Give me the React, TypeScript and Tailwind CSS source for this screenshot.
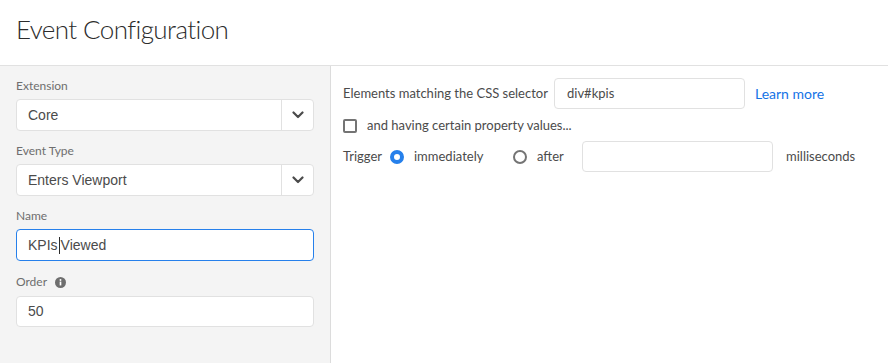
import React from 'react'

const labelCls = 'text-[12px] leading-[14px] text-[#6e6e6e] font-["Lato",sans-serif]'

function Chevron() {
  return (
    <svg width="12" height="8" viewBox="0 0 12 8" fill="none">
      <path d="M1.5 1.5L6 6l4.5-4.5" stroke="#4b4b4b" strokeWidth="2.2" strokeLinecap="round" strokeLinejoin="round" />
    </svg>
  )
}

function SelectBox({ value }: { value: string }) {
  return (
    <div className="flex h-[32px] w-[298px] rounded-[4px] border border-[#e1e1e1] bg-white">
      <div className='flex flex-1 items-center pl-[11px] text-[14px] text-[#4b4b4b] font-["Liberation_Sans",Arial,sans-serif]'>
        {value}
      </div>
      <div className="flex w-[32px] items-center justify-center border-l border-[#e1e1e1]">
        <Chevron />
      </div>
    </div>
  )
}

function Field({ label, children, icon }: { label: string; children: React.ReactNode; icon?: boolean }) {
  return (
    <div className="flex flex-col">
      <div className={`${labelCls} flex items-center gap-[8px] h-[14px] ${icon ? 'mb-[7px] mt-[1px]' : 'mb-[6px]'}`}>
        {label}
        {icon && (
          <svg width="11" height="11" viewBox="0 0 12 12">
            <circle cx="6" cy="6" r="6" fill="#6e6e6e" />
            <rect x="5.1" y="5" width="1.8" height="4.2" fill="white" />
            <circle cx="6" cy="3.2" r="1.05" fill="white" />
          </svg>
        )}
      </div>
      {children}
    </div>
  )
}

export default function App() {
  return (
    <div className='w-[888px] h-[363px] bg-white flex flex-col overflow-hidden font-["Lato",sans-serif]'>
      <div className="h-[66px] border-b border-[#e1e1e1] flex items-center pl-[16px] pb-[6px]">
        <h1 className="text-[26px] font-light text-[#2c2c2c] tracking-[-0.6px]">Event Configuration</h1>
      </div>
      <div className="flex flex-1">
        <div className="w-[331px] bg-[#f4f4f4] border-r border-[#dcdcdc] pl-[16px] pt-[13px] flex flex-col gap-[13px]">
          <Field label="Extension">
            <SelectBox value="Core" />
          </Field>
          <Field label="Event Type">
            <SelectBox value="Enters Viewport" />
          </Field>
          <Field label="Name">
            <div className='flex h-[32px] w-[298px] items-center rounded-[4px] border border-[#2680eb] bg-white pl-[11px] text-[14px] text-[#4b4b4b] font-["Liberation_Sans",Arial,sans-serif]'>
              KPIs<span className="mx-[1px] inline-block h-[17px] w-[1px] bg-[#2c2c2c]" />Viewed
            </div>
          </Field>
          <Field label="Order" icon>
            <div className='flex h-[31px] w-[298px] items-center rounded-[4px] border border-[#e1e1e1] bg-white pl-[11px] text-[14px] text-[#4b4b4b] font-["Liberation_Sans",Arial,sans-serif]'>
              50
            </div>
          </Field>
        </div>
        <div className="flex-1 pl-[12px] pt-[12px] flex flex-col text-[13px] text-[#4b4b4b] whitespace-nowrap">
          <div className="flex items-center h-[31px]">
            <span className="w-[211px]">Elements matching the CSS selector</span>
            <div className="flex h-[31px] w-[191px] items-center rounded-[4px] border border-[#e1e1e1] bg-white pl-[12px] text-[#4b4b4b]">
              div#kpis
            </div>
            <span className="ml-[10px] text-[14px] text-[#1473e6]">Learn more</span>
          </div>
          <div className="flex items-center h-[20px] mt-[7px]">
            <span className="inline-block h-[14px] w-[14px] rounded-[2px] border-2 border-[#747474] bg-white" />
            <span className="ml-[10px]">and having certain property values...</span>
          </div>
          <div className="flex items-center h-[31px] mt-[5px]">
            <span className="w-[47px]">Trigger</span>
            <span className="inline-block h-[14px] w-[14px] rounded-full border-[4px] border-[#2680eb] bg-white" />
            <span className="ml-[10px] w-[99px]">immediately</span>
            <span className="inline-block h-[14px] w-[14px] rounded-full border-2 border-[#747474] bg-white" />
            <span className="ml-[10px] w-[45px]">after</span>
            <div className="h-[31px] w-[191px] rounded-[4px] border border-[#e1e1e1] bg-white" />
            <span className="ml-[13px]">milliseconds</span>
          </div>
        </div>
      </div>
    </div>
  )
}
